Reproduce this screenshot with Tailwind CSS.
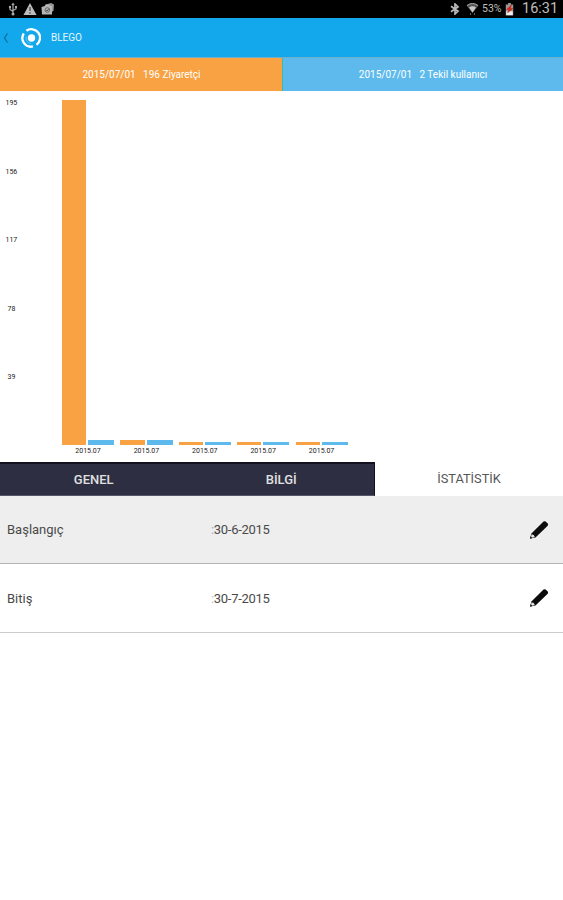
<!DOCTYPE html>
<html lang="tr">
<head>
<meta charset="utf-8">
<title>BLEGO</title>
<script src="https://cdn.jsdelivr.net/npm/@tailwindcss/browser@4"></script>
</head>
<body class="bg-white">
<div class="flex h-[900px] w-[563px] flex-col overflow-hidden bg-white font-['Roboto','Liberation_Sans',sans-serif] text-[#4a4a4a]">
  <div class="flex h-[18px] shrink-0 items-center bg-black pl-[8px] pr-[5px] text-[#bdbdbd]">
    <svg class="h-[14px] w-[10px]" viewBox="0 0 10 14" fill="none" stroke="#a9a9a9" stroke-width="1.200"><path d="M5 12V2M2 5v2.500L5 9.500M8 5v2L5 8.500"/><path d="M5 .5L3.300 3h3.400z" fill="#a9a9a9" stroke="none"/><circle cx="5" cy="12" r="1.500" fill="#a9a9a9" stroke="none"/><circle cx="2" cy="5" r="1.200" fill="#a9a9a9" stroke="none"/><path d="M7 4h2v2H7z" fill="#a9a9a9" stroke="none"/></svg>
    <svg class="ml-[5px] h-[14px] w-[14px]" viewBox="0 0 14 14"><path d="M7 1l6.500 12H.5z" fill="#bcbcbc"/><path d="M7 5v4M7 10.300v1.500" stroke="#444" stroke-width="1.300"/></svg>
    <svg class="ml-[4px] h-[14px] w-[14px]" viewBox="0 0 14 14"><path d="M3.500 3L10 1l3 1.500-.5 6-1.500 1.500z" fill="#999"/><path d="M.5 5L4 4l1-1.500h3L9 4h2v8.500H1z" fill="#b5b5b5"/><circle cx="6.300" cy="8" r="2.300" fill="none" stroke="#666"/><path d="M5 8l1 1 2-2.500" fill="none" stroke="#555"/></svg>
    <div class="flex-1"></div>
    <svg class="h-[12px] w-[10px]" viewBox="0 0 10 12" fill="none" stroke="#b8b8b8" stroke-width="1.700"><path d="M1 3.200l7 5L5 11V1l3 2.800L1 8.800"/></svg>
    <svg class="ml-[6px] h-[14px] w-[13px]" viewBox="0 0 13 14"><path d="M.5 3.500Q6.500-.8 12.500 3.500L6.500 11z" fill="#555"/><path d="M3 5.500q3.500-2.500 7 0L6.500 10.500z" fill="#c9c9c9"/><path d="M1 3.500q5.500-4 11 0" fill="none" stroke="#aaa"/><path d="M4.500 11v2M8.500 11v2" stroke="#666"/></svg>
    <span class="ml-[3px] w-[20px] whitespace-nowrap text-[10.500px] leading-none">53%</span>
    <svg class="ml-[3px] h-[13px] w-[9px]" viewBox="0 0 9 14"><path d="M3 0h3v1.500h2.500V13.500H.5V1.500H3z" fill="#999"/><path d="M1 9h7v4H1z" fill="#eee"/><path d="M6.500 2L1.500 7h2.200L2.500 10.500 8 6H5.500z" fill="#cf2519" stroke="#cf2519" stroke-width=".6"/></svg>
    <span class="ml-[8px] w-[36px] whitespace-nowrap text-[14.500px] leading-none">16:31</span>
  </div>
  <div class="flex h-[39px] shrink-0 items-center bg-[#13a8eb] pl-[3px]">
    <svg class="h-[12px] w-[6px]" viewBox="0 0 6 12" fill="none" stroke="#0c6c9c" stroke-width="1.200"><path d="M4.500 1.500L1.500 6l3 4.500"/></svg>
    <svg class="ml-[12px] h-[20px] w-[20px]" viewBox="0 0 20 20" fill="none" stroke="#fff"><path d="M5.400 2.800A8.500 8.500 0 0 1 15.500 16.700" stroke-width="2.300"/><path d="M2.800 5.500A8.500 8.500 0 0 0 12 18.400" stroke-width="2.300"/><circle cx="10.500" cy="10" r="3.700" fill="#fff" stroke="none"/><path d="M5.300 8.500a5.300 5.300 0 0 0 4.700 7" stroke-width="1" opacity=".35"/></svg>
    <span class="ml-[10px] text-[10px] leading-none text-[#e4f6ff]">BLEGO</span>
  </div>
  <div class="flex h-[34px] shrink-0 whitespace-pre pt-px text-[10px] leading-none text-white bg-[#6fafc8]">
    <div class="flex w-[282px] items-center justify-center bg-[#f8a244]"><span class="pl-[1px]">2015/07/01   196 Ziyaretçi</span></div>
    <div class="flex flex-1 items-center justify-center border-l border-l-[#35bda8] bg-[#5ebaec]"><span class="text-[10px]">2015/07/01   2 Tekil kullanıcı</span></div>
  </div>
  <div class="flex h-[371px] shrink-0">
    <div class="flex h-[290px] w-[62px] flex-col justify-between pl-[5.500px] pt-[8px] text-[7px] leading-[8px] text-[#222]">
      <span>195</span><span>156</span><span>117</span><span class="pl-[2px]">78</span><span class="pl-[2px]">39</span>
    </div>
    <div class="grid h-full grid-cols-[58.400px_58.400px_58.400px_58.400px_58.400px] pt-[8px] text-[7px] leading-[8px] text-[#222]">
      <div><div class="flex h-[346px] items-end gap-[2px]"><div class="h-[345px] w-[24.200px] bg-[#f8a244]"></div><div class="h-[5px] w-[26px] bg-[#5ebaec]"></div></div><div class="mt-[2px] w-[52px] text-center">2015.07</div></div>
      <div><div class="flex h-[346px] items-end gap-[2px]"><div class="h-[5px] w-[24.200px] bg-[#f8a244]"></div><div class="h-[5px] w-[26px] bg-[#5ebaec]"></div></div><div class="mt-[2px] w-[52px] text-center">2015.07</div></div>
      <div><div class="flex h-[346px] items-end gap-[2px]"><div class="h-[3px] w-[24.200px] bg-[#f8a244]"></div><div class="h-[3px] w-[26px] bg-[#5ebaec]"></div></div><div class="mt-[2px] w-[52px] text-center">2015.07</div></div>
      <div><div class="flex h-[346px] items-end gap-[2px]"><div class="h-[3px] w-[24.200px] bg-[#f8a244]"></div><div class="h-[3px] w-[26px] bg-[#5ebaec]"></div></div><div class="mt-[2px] w-[52px] text-center">2015.07</div></div>
      <div><div class="flex h-[346px] items-end gap-[2px]"><div class="h-[3px] w-[24.200px] bg-[#f8a244]"></div><div class="h-[3px] w-[26px] bg-[#5ebaec]"></div></div><div class="mt-[2px] w-[52px] text-center">2015.07</div></div>
    </div>
  </div>
  <div class="flex h-[34px] shrink-0 text-[13px] leading-none">
    <div class="flex w-[375px] border-b border-r border-t-2 border-b-[#555565] border-r-[#11111f] border-t-[#11111f] bg-[#2d2e42] font-medium text-[#e0e0e0]">
      <div class="flex flex-1 items-center justify-center pl-[1px]">GENEL</div>
      <div class="flex flex-1 items-center justify-center pl-[2px]">BİLGİ</div>
    </div>
    <div class="flex flex-1 items-center justify-center text-[12.800px] text-[#555]">İSTATİSTİK</div>
  </div>
  <div class="flex h-[68px] shrink-0 items-center border-b-[1.500px] border-[#b3b3b3] bg-[#eee] pl-[7px] pr-[14px] text-[13px] leading-none">
    <span class="w-[204px]">Başlangıç</span><span class="flex-1 tracking-[-0.300px]"><span class="text-[#aaa]">:</span>30-6-2015</span>
    <svg class="h-[20px] w-[20px]" viewBox="0 0 20 20"><path d="M1.200 18.500l1-4.800L14.500 1.600q1-.9 2.200 0l2 2q.8 1 0 2.100L6.500 17.400z" fill="#0c0c0c"/><path d="M2.500 14.200q2.800.2 3.300 2.900l-3.200 1-.7-.7z" fill="#e4e4e4"/><path d="M1 18.700l.6-2.500 1.900 1.900z" fill="#111"/></svg>
  </div>
  <div class="flex h-[69px] shrink-0 items-center border-b-[1.500px] border-[#ccc] bg-white pl-[7px] pr-[14px] text-[13px] leading-none">
    <span class="w-[204px]">Bitiş</span><span class="flex-1 tracking-[-0.300px]"><span class="text-[#bbb]">:</span>30-7-2015</span>
    <svg class="h-[20px] w-[20px]" viewBox="0 0 20 20"><path d="M1.200 18.500l1-4.800L14.500 1.600q1-.9 2.200 0l2 2q.8 1 0 2.100L6.500 17.400z" fill="#0c0c0c"/><path d="M2.500 14.200q2.800.2 3.300 2.900l-3.200 1-.7-.7z" fill="#e4e4e4"/><path d="M1 18.700l.6-2.500 1.900 1.900z" fill="#111"/></svg>
  </div>
</div>
</body>
</html>
